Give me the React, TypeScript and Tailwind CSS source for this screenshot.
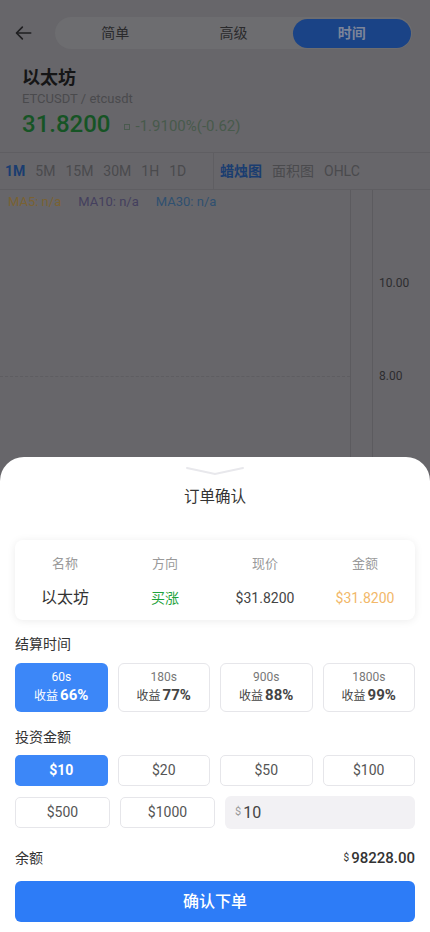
import React from "react";

const font = { fontFamily: 'Roboto, "Noto Sans CJK SC", sans-serif' };

function Top() {
  return (
    <div className="flex flex-col">
      <div className="flex items-center h-[66px] pl-[14px] pr-[18px]">
        <svg width="20" height="20" viewBox="0 0 24 24" fill="none" stroke="#1f1f21" strokeWidth="2" strokeLinecap="round" strokeLinejoin="round">
          <path d="M20 12H4" />
          <path d="M10 5l-7 7 7 7" />
        </svg>
        <div className="ml-[21px] flex-1 h-[32px] rounded-full bg-[#6d6d70] flex items-center p-[1px]">
          <div className="flex-1 text-center text-[14px] text-[#2a2a2c]">简单</div>
          <div className="flex-1 text-center text-[14px] text-[#2a2a2c]">高级</div>
          <div className="flex-1 h-[29px] rounded-full bg-[#1a4386] flex items-center justify-center text-[14px] font-bold text-[#7d8599]">时间</div>
        </div>
      </div>
      <div className="px-[22px]">
        <div className="text-[18px] font-bold text-[#151516] leading-[24px]">以太坊</div>
        <div className="text-[13px] text-[#4a4a4d] leading-[18px]">ETCUSDT / etcusdt</div>
        <div className="flex items-end leading-[30px] mt-[1px]">
          <span className="text-[24px] text-[#165425] font-medium">31.8200</span>
          <span className="ml-[13px] mb-[9px] w-[6px] h-[6px] border border-[#4a5a4e]"></span>
          <span className="ml-[6px] mb-[3px] text-[15px] text-[#485a4c] leading-[20px]">-1.9100%(-0.62)</span>
        </div>
      </div>
      <div className="mt-[13px] border-t border-b border-[#5f5e62] flex h-[38px] items-center">
        <div className="flex items-center gap-[10px] pl-[5px] pr-[12px] h-full border-r border-[#5f5e62] w-[214px] text-[14px] text-[#4a4a4d]">
          <span className="font-bold text-[#1a3d70]">1M</span>
          <span>5M</span>
          <span>15M</span>
          <span>30M</span>
          <span>1H</span>
          <span>1D</span>
        </div>
        <div className="flex items-center gap-[10px] pl-[6px] text-[14px] text-[#4a4a4d]">
          <span className="font-bold text-[#1a3d70]">蜡烛图</span>
          <span>面积图</span>
          <span>OHLC</span>
        </div>
      </div>
      <div className="flex relative h-[280px]">
        <div className="flex-1 relative">
          <div className="flex gap-[17px] pl-[8px] pt-[2px] text-[13px]">
            <span className="text-[#7a6232]">MA5: n/a</span>
            <span className="text-[#443f5e]">MA10: n/a</span>
            <span className="text-[#2f5070]">MA30: n/a</span>
          </div>
          <div className="absolute left-0 right-0 top-[186px] border-t border-dashed border-[#5e5d61]"></div>
        </div>
        <div className="w-[23px] border-l border-r border-[#5c5b5f]"></div>
        <div className="w-[57px] relative text-[12px] text-[#2d2d30]">
          <span className="absolute left-[6px] top-[84px]">10.00</span>
          <span className="absolute left-[6px] top-[177px]">8.00</span>
        </div>
      </div>
    </div>
  );
}

function Sheet() {
  const times = [
    { t: "60s", p: "66%", a: true },
    { t: "180s", p: "77%" },
    { t: "900s", p: "88%" },
    { t: "1800s", p: "99%" },
  ];
  const amts = ["$10", "$20", "$50", "$100"];
  return (
    <div className="absolute left-0 right-0 bottom-0 h-[475px] bg-white rounded-t-[24px] px-[15px]">
      <div className="flex justify-center pt-[9px]">
        <svg width="60" height="10" viewBox="0 0 60 10">
          <path d="M2 2 L30 8 L58 2" fill="none" stroke="#e8e8ec" strokeWidth="2" strokeLinecap="round" />
        </svg>
      </div>
      <div className="text-center text-[15.5px] text-[#333] mt-[10px] leading-[22px]">订单确认</div>
      <div className="mt-[32px] rounded-[8px] shadow-[0_1px_8px_rgba(0,0,0,0.08)] h-[80px] flex flex-col">
        <div className="grid grid-cols-4 text-center text-[13px] text-[#9a9a9a] pt-[14px] leading-[20px]">
          <span>名称</span>
          <span>方向</span>
          <span>现价</span>
          <span>金额</span>
        </div>
        <div className="grid grid-cols-4 text-center items-center mt-[13px] leading-[22px]">
          <span className="text-[16px] text-[#333]">以太坊</span>
          <span className="text-[14px] text-[#1fa33d]">买涨</span>
          <span className="text-[14px] text-[#444]">$31.8200</span>
          <span className="text-[14px] text-[#f2b869]">$31.8200</span>
        </div>
      </div>
      <div className="mt-[14px] text-[14px] text-[#333] leading-[20px]">结算时间</div>
      <div className="mt-[9px] grid grid-cols-4 gap-[10px]">
        {times.map((x) => (
          <div
            key={x.t}
            className={
              x.a
                ? "h-[49px] rounded-[6px] bg-[#3c87f8] flex flex-col items-center justify-center text-white"
                : "h-[49px] rounded-[6px] border border-[#e6e6ea] flex flex-col items-center justify-center text-[#444]"
            }
          >
            <span className={x.a ? "text-[12px] leading-[16px]" : "text-[12px] leading-[16px] text-[#777]"}>{x.t}</span>
            <span className="leading-[20px]">
              <span className="text-[12px]">收益</span>
              <span className="text-[15px] font-bold ml-[2px]">{x.p}</span>
            </span>
          </div>
        ))}
      </div>
      <div className="mt-[15px] text-[14px] text-[#333] leading-[20px]">投资金额</div>
      <div className="mt-[8px] grid grid-cols-4 gap-[10px]">
        {amts.map((a, i) => (
          <div
            key={a}
            className={
              i === 0
                ? "h-[31px] rounded-[5px] bg-[#3c87f8] flex items-center justify-center text-white text-[14px] font-bold"
                : "h-[31px] rounded-[5px] border border-[#e6e6ea] flex items-center justify-center text-[#555] text-[14px]"
            }
          >
            {a}
          </div>
        ))}
      </div>
      <div className="mt-[11px] flex gap-[10px]">
        <div className="w-[95px] h-[31px] rounded-[5px] border border-[#e6e6ea] flex items-center justify-center text-[#555] text-[14px]">$500</div>
        <div className="w-[95px] h-[31px] rounded-[5px] border border-[#e6e6ea] flex items-center justify-center text-[#555] text-[14px]">$1000</div>
        <div className="flex-1 h-[33px] -mt-[1px] rounded-[6px] bg-[#f2f1f4] flex items-center pl-[10px]">
          <span className="text-[11px] text-[#999]">$</span>
          <span className="ml-[2px] text-[16px] text-[#444]">10</span>
        </div>
      </div>
      <div className="mt-[19px] flex justify-between items-center leading-[20px]">
        <span className="text-[14px] text-[#333]">余额</span>
        <span className="flex items-center text-[#333]">
          <span className="text-[10px] mr-[2px]">$</span>
          <span className="text-[15px] font-medium">98228.00</span>
        </span>
      </div>
      <div className="mt-[13px] h-[41px] rounded-[6px] bg-[#2d7cf7] flex items-center justify-center text-white text-[16px] font-medium">确认下单</div>
    </div>
  );
}

export default function App() {
  return (
    <div className="relative w-[430px] h-[932px] overflow-hidden bg-[#67666a]" style={font}>
      <Top />
      <Sheet />
    </div>
  );
}
